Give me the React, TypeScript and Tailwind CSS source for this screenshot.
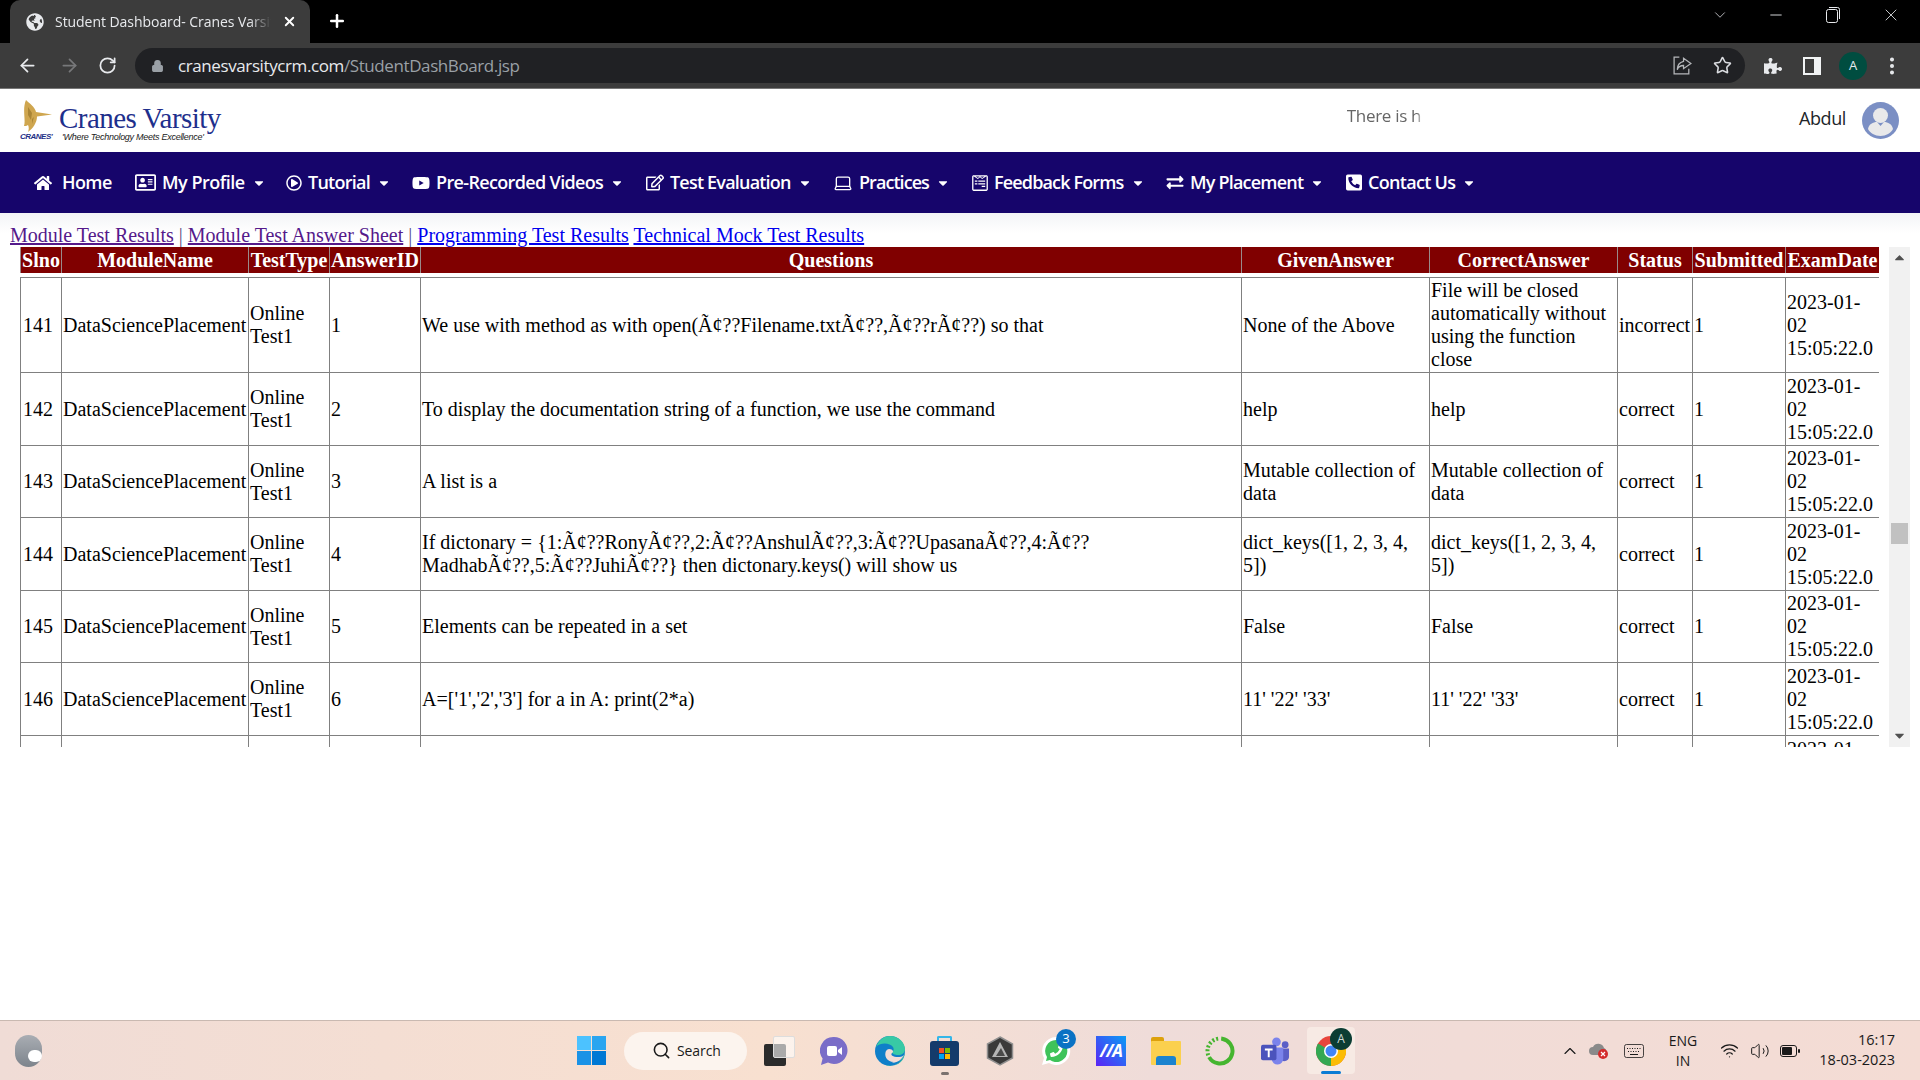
import type { ReactNode } from "react";
import { ChevronDown, Minus, X, Plus, ArrowLeft, ArrowRight, RotateCw, Lock, Star, Laptop, Search, ChevronUp, Wifi, Volume2, MoreVertical } from "lucide-react";
import { FaHome, FaRegAddressCard, FaRegPlayCircle, FaYoutube, FaRegEdit, FaWpforms, FaExchangeAlt, FaPhoneSquareAlt, FaPuzzlePiece, FaGlobeAmericas, FaCaretDown, FaCaretUp, FaPhoneAlt } from "react-icons/fa";

// Пункты меню: ширина и трекинг заданы явно, чтобы шаг совпадал с оригиналом.
const NAV_ITEMS: { label: string; icon: ReactNode; width: string; tracking: string; caret: boolean }[] = [
  { label: "Home", icon: <FaHome className="w-[18px] h-[16px] mr-[4px]" />, width: "w-[101px]", tracking: "tracking-[-0.6px]", caret: false },
  { label: "My Profile", icon: <FaRegAddressCard className="w-[21px] h-[19px]" />, width: "w-[151px]", tracking: "tracking-[-0.5px]", caret: true },
  { label: "Tutorial", icon: <FaRegPlayCircle className="w-[16px] h-[16px]" />, width: "w-[126px]", tracking: "tracking-[-0.75px]", caret: true },
  { label: "Pre-Recorded Videos", icon: <FaYoutube className="w-[18px] h-[18px]" />, width: "w-[234px]", tracking: "tracking-[-0.65px]", caret: true },
  { label: "Test Evaluation", icon: <FaRegEdit className="w-[18px] h-[17px]" />, width: "w-[187px]", tracking: "tracking-[-0.8px]", caret: true },
  { label: "Practices", icon: <Laptop className="w-[20px] h-[20px]" strokeWidth={1.6} />, width: "w-[139px]", tracking: "tracking-[-0.95px]", caret: true },
  { label: "Feedback Forms", icon: <FaWpforms className="w-[16px] h-[18px]" />, width: "w-[194px]", tracking: "tracking-[-0.85px]", caret: true },
  { label: "My Placement", icon: <FaExchangeAlt className="w-[18px] h-[17px]" />, width: "w-[180px]", tracking: "tracking-[-0.8px]", caret: true },
  { label: "Contact Us", icon: <FaPhoneSquareAlt className="w-[16px] h-[19px]" />, width: "w-[135px]", tracking: "tracking-[-0.7px]", caret: true },
];

const COLUMNS = ["Slno", "ModuleName", "TestType", "AnswerID", "Questions", "GivenAnswer", "CorrectAnswer", "Status", "Submitted", "ExamDate"];

type Row = { id: number; answerId: number; question: string; given: string; correct: string; status: string; height: string };

const ROWS: Row[] = [
  { id: 141, answerId: 1, question: "We use with method as with open(Ã¢??Filename.txtÃ¢??,Ã¢??rÃ¢??) so that", given: "None of the Above", correct: "File will be closed automatically without using the function close", status: "incorrect", height: "h-[95px]" },
  { id: 142, answerId: 2, question: "To display the documentation string of a function, we use the command", given: "help", correct: "help", status: "correct", height: "h-[73px]" },
  { id: 143, answerId: 3, question: "A list is a", given: "Mutable collection of data", correct: "Mutable collection of data", status: "correct", height: "h-[72px]" },
  { id: 144, answerId: 4, question: "If dictonary = {1:Ã¢??RonyÃ¢??,2:Ã¢??AnshulÃ¢??,3:Ã¢??UpasanaÃ¢??,4:Ã¢?? MadhabÃ¢??,5:Ã¢??JuhiÃ¢??} then dictonary.keys() will show us", given: "dict_keys([1, 2, 3, 4, 5])", correct: "dict_keys([1, 2, 3, 4, 5])", status: "correct", height: "h-[73px]" },
  { id: 145, answerId: 5, question: "Elements can be repeated in a set", given: "False", correct: "False", status: "correct", height: "h-[72px]" },
  { id: 146, answerId: 6, question: "A=['1','2','3'] for a in A: print(2*a)", given: "11' '22' '33'", correct: "11' '22' '33'", status: "correct", height: "h-[73px]" },
  { id: 147, answerId: 7, question: "", given: "", correct: "", status: "correct", height: "h-[73px]" },
];

function TableCols() {
  return (
    <colgroup>
      <col className="w-[41px]" />
      <col className="w-[187px]" />
      <col className="w-[81px]" />
      <col className="w-[91px]" />
      <col className="w-[821px]" />
      <col className="w-[188px]" />
      <col className="w-[188px]" />
      <col className="w-[75px]" />
      <col className="w-[93px]" />
      <col className="w-[94px]" />
    </colgroup>
  );
}

function BrowserChrome() {
  return (
    <div className="shrink-0 font-['Open_Sans',sans-serif]">
      {/* Полоса вкладок */}
      <div className="h-[43px] bg-black flex items-end text-white">
        <div className="ml-[10px] w-[300px] h-[43px] rounded-t-[10px] bg-[#3c3c3c] flex items-center pl-[16px] pr-[13px] gap-[11px]">
          <FaGlobeAmericas className="w-[18px] h-[18px] text-[#e8eaed] shrink-0" />
          <span className="w-[224px] overflow-hidden whitespace-nowrap text-[14px] tracking-[-0.05px] text-[#e8eaed] [mask-image:linear-gradient(90deg,#000_90%,transparent)]">Student Dashboard- Cranes Varsity</span>
          <X className="w-[15px] h-[15px] shrink-0" strokeWidth={3} />
        </div>
        <Plus className="ml-[17px] mb-[12px] w-[20px] h-[20px]" strokeWidth={3} />
        <div className="ml-auto flex items-center h-[43px] mb-[7px] text-[#e8eaed]">
          <ChevronDown className="w-[18px] h-[18px] mr-[38px]" strokeWidth={1} />
          <Minus className="w-[18px] h-[18px] mr-[41px]" strokeWidth={1.2} />
          <svg viewBox="0 0 14 16" className="w-[14px] h-[16px] mr-[41px]" fill="none" stroke="currentColor">
            <rect x="0.500" y="2.500" width="11" height="13" rx="2" />
            <path d="M3 0.500h8.500a2 2 0 0 1 2 2V12" />
          </svg>
          <X className="w-[20px] h-[20px] mr-[19px]" strokeWidth={1} />
        </div>
      </div>
      {/* Панель адреса */}
      <div className="h-[46px] bg-[#3c3c3c] border-b border-[#777] flex items-start pt-[5px] text-white">
        <div className="flex items-center h-[35px] text-[#e8eaed]">
          <ArrowLeft className="ml-[17px] w-[21px] h-[21px]" strokeWidth={2} />
          <ArrowRight className="ml-[21px] w-[21px] h-[21px] text-[#77787a]" strokeWidth={2} />
          <RotateCw className="ml-[18px] w-[19px] h-[19px]" strokeWidth={2.2} />
        </div>
        <div className="ml-[18px] w-[1610px] h-[35px] rounded-full bg-[#202124] flex items-center">
          <Lock className="ml-[16px] w-[13px] h-[14px] text-[#9aa0a6] fill-[#9aa0a6]" />
          <span className="ml-[14px] text-[17px] tracking-[-0.4px] text-[#e8eaed]">
            cranesvarsitycrm.com<span className="text-[#9aa0a6]">/StudentDashBoard.jsp</span>
          </span>
          <svg viewBox="0 0 20 20" className="ml-auto w-[21px] h-[21px] text-[#b5b7ba]" fill="none" stroke="currentColor" strokeWidth="1.2">
            <path d="M7 2H2v16h14v-5" />
            <path d="M11 3l7 5-7 5v-3c-3 0-5 1-6 4 0-5 2-7 6-8z" />
          </svg>
          <Star className="ml-[20px] mr-[13px] w-[19px] h-[19px] text-[#dadce0]" strokeWidth={2} />
        </div>
        <div className="flex items-center h-[35px] text-[#e8eaed]">
          <FaPuzzlePiece className="ml-[19px] w-[18px] h-[18px]" />
          <div className="ml-[21px] w-[18px] h-[18px] border-[2px] border-r-[7px] border-[#f1f3f4]" />
          <div className="ml-[18px] w-[28px] h-[28px] rounded-full bg-[#004d40] flex items-center justify-center text-[13px]">A</div>
          <MoreVertical className="ml-[14px] w-[22px] h-[22px]" strokeWidth={2.4} />
        </div>
      </div>
    </div>
  );
}

function CranesLogo() {
  return (
    <div className="flex items-start">
      <div className="w-[39px] flex flex-col">
        <svg viewBox="0 0 29 32" className="ml-[3px] w-[29px] h-[32px]">
          <path d="M3 0c3 3 9 7 10 12l16 2.500-15 2c0 6-4 12-9 15.500 1-3 1-5 0-7-1 1-3 1-4 1C3 20-1 9 3 0z" fill="#cfa64f" />
          <path d="M5 7l4 6-1 7-3-5zM9 19l2-2-2 7z" fill="#a98536" />
        </svg>
        <span className="text-[8px] leading-[10px] font-bold italic text-[#1f2f86] font-['Liberation_Sans',sans-serif] tracking-[-0.5px]">CRANES'</span>
      </div>
      <div className="flex flex-col pt-[5px]">
        <span className="text-[29px] leading-[27px] tracking-[-0.55px] text-[#1e2f8c] font-['Liberation_Serif',serif] whitespace-nowrap">Cranes Varsity</span>
        <span className="ml-[3px] text-[9px] leading-[10px] italic text-[#222] font-['Liberation_Sans',sans-serif] tracking-[-0.27px] whitespace-nowrap">'Where Technology Meets Excellence'</span>
      </div>
    </div>
  );
}

function PageHeader() {
  return (
    <div className="h-[63px] shrink-0 bg-white flex items-center pl-[20px] pr-[21px] font-['Open_Sans',sans-serif]">
      <CranesLogo />
      <span className="ml-[1126px] -mt-[10px] w-[76px] overflow-hidden whitespace-nowrap text-[17px] tracking-[-0.3px] text-[#666] [mask-image:linear-gradient(90deg,#000_92%,transparent)]">There is h</span>
      <span className="ml-auto mr-[16px] -mt-[5px] text-[18px] tracking-[-0.4px] text-[#212529]">Abdul</span>
      <svg viewBox="0 0 37 37" className="w-[37px] h-[37px]">
        <circle cx="18.5" cy="18.5" r="18.5" fill="#7b8fc4" />
        <circle cx="18.5" cy="13.5" r="7.5" fill="#e9e9ea" />
        <path d="M6 27c1-5 5-7 9-7l3.5 4 3.5-4c4 0 8 2 9 7-2 4-7 7-12.500 7S8 31 6 27z" fill="#e9e9ea" />
      </svg>
    </div>
  );
}

function NavBar() {
  return (
    <nav className="h-[61px] shrink-0 bg-[#16056b] flex items-center pl-[34px] text-white font-['Open_Sans',sans-serif] font-semibold">
      {NAV_ITEMS.map((item) => (
        <div key={item.label} className={`${item.width} flex items-center shrink-0`}>
          <span className="shrink-0 flex items-center">{item.icon}</span>
          <span className={`ml-[6px] text-[18px] ${item.tracking} whitespace-nowrap`}>{item.label}</span>
          {item.caret && <FaCaretDown className="ml-[7px] w-[14px] h-[14px] shrink-0" />}
        </div>
      ))}
    </nav>
  );
}

function ResultsTable() {
  return (
    <div className="flex items-stretch h-[500px] ml-[20px]">
      <div className="w-[1859px] overflow-hidden">
        <table className="table-fixed w-[1859px] border-collapse">
          <TableCols />
          <thead>
            <tr className="h-[26px] bg-[#800000] text-white">
              {COLUMNS.map((col) => (
                <th key={col} className="px-0 border-x border-[#9a8a8a] font-bold whitespace-nowrap text-center">{col}</th>
              ))}
            </tr>
          </thead>
        </table>
        <table className="table-fixed w-[1859px] border-collapse mt-[4px] text-black">
          <TableCols />
          <tbody>
            {ROWS.map((row) => (
              <tr key={row.id} className={row.height}>
                <td className="border border-[#808080] pl-[2px] py-0">{row.id}</td>
                <td className="border border-[#808080] px-px py-0 whitespace-nowrap">DataSciencePlacement</td>
                <td className="border border-[#808080] px-px py-0">Online Test1</td>
                <td className="border border-[#808080] px-px py-0">{row.answerId}</td>
                <td className="border border-[#808080] px-px py-0">{row.question}</td>
                <td className="border border-[#808080] px-px py-0">{row.given}</td>
                <td className="border border-[#808080] px-px py-0">{row.correct}</td>
                <td className="border border-[#808080] px-px py-0">{row.status}</td>
                <td className="border border-[#808080] px-px py-0">1</td>
                <td className="border border-[#808080] px-px py-0">2023-01-02 15:05:22.0</td>
              </tr>
            ))}
          </tbody>
        </table>
      </div>
      {/* Полоса прокрутки таблицы */}
      <div className="ml-[10px] w-[21px] bg-[#f1f1f1] flex flex-col items-center text-[#505050]">
        <FaCaretUp className="mt-[3px] w-[15px] h-[15px]" />
        <div className="mt-[258px] w-[17px] h-[21px] bg-[#c1c1c1]" />
        <FaCaretDown className="mt-auto mb-[4px] w-[15px] h-[15px]" />
      </div>
    </div>
  );
}

function MainContent() {
  return (
    <main className="flex-1 bg-white bg-[linear-gradient(#f3f4f6,#ffffff_20px)] font-['Liberation_Serif',serif] text-[20px] leading-[23px]">
      <div className="pl-[10px] pt-[11px] h-[34px] text-[#5a4a80] whitespace-nowrap">
        <a className="underline text-[#551a8b]">Module Test Results</a> | <a className="underline text-[#551a8b]">Module Test Answer Sheet</a> | <a className="underline text-[#0000ee]">Programming Test Results</a> <a className="underline text-[#0000ee]">Technical Mock Test Results</a>
      </div>
      <ResultsTable />
    </main>
  );
}

function Taskbar() {
  return (
    <div className="h-[60px] shrink-0 border-t border-[#c9b9b1] bg-[linear-gradient(90deg,#f0dcd6,#f8e0d0_40%,#efdcd9_60%,#f4dcd4)] flex items-center font-['Open_Sans',sans-serif] text-[#1a1a1a]">
      {/* Погода */}
      <div className="ml-[15px] w-[27px] h-[32px] rounded-full bg-[linear-gradient(#a9adb3,#7d848c)] flex items-end justify-end pb-[5px]">
        <div className="w-[14px] h-[12px] rounded-full bg-white" />
      </div>

      {/* Пуск */}
      <svg viewBox="0 0 29 29" className="ml-[535px] w-[29px] h-[29px]">
        <rect x="0" y="0" width="14" height="14" fill="#4cc2ff" />
        <rect x="15" y="0" width="14" height="14" fill="#2aa5f0" />
        <rect x="0" y="15" width="14" height="14" fill="#1a92e6" />
        <rect x="15" y="15" width="14" height="14" fill="#0078d4" />
      </svg>
      <div className="ml-[18px] w-[123px] h-[38px] rounded-full bg-[#fcf4ee] flex items-center pl-[28px] text-[14px] gap-[6px]">
        <Search className="w-[19px] h-[19px]" strokeWidth={2} />
        <span className="tracking-[-0.1px]">Search</span>
      </div>

      {/* Представление задач */}
      <div className="relative ml-[17px] w-[31px] h-[30px]">
        <div className="absolute left-0 bottom-0 w-[22px] h-[22px] rounded-[2px] bg-[#2b2b2b]" />
        <div className="absolute right-0 top-0 w-[22px] h-[22px] rounded-[2px] bg-white/60 border border-[#ddd]" />
      </div>

      {/* Чат */}
      <svg viewBox="0 0 28 30" className="ml-[25px] w-[28px] h-[30px]">
        <path d="M14 1a13.500 13.500 0 1 1-6 25.600L1 29l1.600-6.500A13.500 13.500 0 0 1 14 1z" fill="#7a6dc8" />
        <rect x="7" y="10" width="10" height="10" rx="2" fill="#fff" />
        <path d="M18 14l4-3v8l-4-3z" fill="#fff" />
      </svg>

      {/* Edge */}
      <svg viewBox="0 0 30 30" className="ml-[27px] w-[30px] h-[30px]">
        <circle cx="15" cy="15" r="15" fill="#0f7fc9" />
        <path d="M30 17c-1 8-7 13-15 13-2 0-3 0-4-1 6 2 12 0 15-5 1-2 3-5 4-7z" fill="#35b6a8" />
        <path d="M1 11C4 3 10 0 15 0c9 0 15 7 15 13 0 4-3 6-7 6-3 0-6-1-6-3 2-1 2-3 1-5-3-4-12-5-17 0z" fill="#38c9a5" />
        <path d="M14 13c4 0 5 3 3 4-2 2 1 4 6 4 2 0 4 0 6-2-3 6-8 8-13 8-7 0-8-5-7-8 1-3 3-6 5-6z" fill="#f2dcd6" />
        <path d="M11 15c-2 4 0 11 8 11-3 2-8 2-10-1-3-3-1-8 2-10z" fill="#0f7fc9" />
      </svg>

      {/* Store */}
      <div className="relative ml-[25px] w-[29px] h-[30px]">
        <div className="absolute left-[7px] top-0 w-[15px] h-[8px] border-2 border-b-0 border-[#35b6e8] rounded-t-[2px]" />
        <div className="absolute left-0 top-[5px] w-[29px] h-[25px] rounded-[3px] bg-[#143b6b] flex items-center justify-center">
          <div className="grid grid-cols-2 gap-px w-[11px] h-[11px]">
            <div className="bg-[#f25022]" />
            <div className="bg-[#7fba00]" />
            <div className="bg-[#00a4ef]" />
            <div className="bg-[#ffb900]" />
          </div>
        </div>
        <div className="absolute left-[11px] top-[36px] w-[8px] h-[3px] rounded-full bg-[#7a716e]" />
      </div>

      {/* Шестиугольник */}
      <svg viewBox="0 0 28 30" className="ml-[27px] w-[28px] h-[30px]">
        <path d="M14 1l12.500 7v14L14 29 1.500 22V8z" fill="#3a3a3a" stroke="#8f8f8f" strokeWidth="1.5" />
        <path d="M14 6l8 15H6z" fill="#b5b5b5" />
        <path d="M15 12l4 8h-9z" fill="#4a4a4a" />
      </svg>

      {/* WhatsApp */}
      <div className="relative ml-[27px] w-[30px] h-[30px]">
        <svg viewBox="0 0 30 30" className="w-[30px] h-[30px]">
          <path d="M15 1a14 14 0 1 1-7 26L1 29l2-7A14 14 0 0 1 15 1z" fill="#fff" />
          <path d="M15 4a11 11 0 1 1-6 20l-4 1 1-4A11 11 0 0 1 15 4z" fill="#3fc35a" />
        </svg>
        <FaPhoneAlt className="absolute left-[9px] top-[8px] w-[13px] h-[13px] text-white scale-x-[-1]" />
        <div className="absolute -right-[5px] -top-[7px] w-[20px] h-[20px] rounded-full bg-[#0a72c4] text-white text-[13px] flex items-center justify-center">3</div>
      </div>

      {/* MA */}
      <div className="ml-[25px] w-[30px] h-[30px] bg-[linear-gradient(45deg,#5b22f5,#0a9cf5)] text-white italic font-bold text-[17px] flex items-center justify-center tracking-[-1px]">//A</div>

      {/* Проводник */}
      <div className="relative ml-[25px] w-[30px] h-[28px]">
        <div className="absolute left-0 top-0 w-[13px] h-[8px] rounded-t-[2px] bg-[#dda10c]" />
        <div className="absolute left-0 top-[4px] w-[30px] h-[24px] rounded-[1px] bg-[#fbd04e]" />
        <div className="absolute left-[5px] top-[19px] w-[20px] h-[9px] rounded-t-[3px] bg-[#1b83cf]" />
      </div>

      {/* Зелёное кольцо */}
      <svg viewBox="0 0 30 30" className="ml-[24px] w-[30px] h-[30px]">
        <circle cx="15" cy="15" r="12.500" fill="none" stroke="#45b52f" strokeWidth="4" strokeDasharray="50 2 2 2 2 2 2 2 2 2 2 2 2 3" transform="rotate(-80 15 15)" />
      </svg>

      {/* Teams */}
      <svg viewBox="0 0 30 30" className="ml-[26px] w-[29px] h-[29px]">
        <circle cx="25" cy="9" r="3.500" fill="#5b5fc7" />
        <circle cx="16" cy="6" r="4.500" fill="#7b83eb" />
        <path d="M20 13h9v9a5 5 0 0 1-9 2z" fill="#5b5fc7" />
        <path d="M9 12h14v11a6 6 0 0 1-12 1z" fill="#7b83eb" />
        <rect x="0" y="9" width="16" height="16" rx="2" fill="#4b53bc" />
        <path d="M4 13h8v2H9v7H7v-7H4z" fill="#fff" />
      </svg>

      {/* Chrome с профилем */}
      <div className="relative ml-[17px] w-[48px] h-[47px] rounded-[4px] bg-[#f7eae4] flex items-center justify-center">
        <svg viewBox="0 0 30 30" className="w-[30px] h-[30px]">
          <circle cx="15" cy="15" r="15" fill="#e8453c" />
          <path d="M15 15L2 7.500A15 15 0 0 0 15 30z" fill="#34a853" />
          <path d="M15 15v15A15 15 0 0 0 28 7.500H15z" fill="#fbbc05" />
          <circle cx="15" cy="15" r="7" fill="#fff" />
          <circle cx="15" cy="15" r="5.500" fill="#4285f4" />
        </svg>
        <div className="absolute right-[3px] top-[1px] w-[22px] h-[22px] rounded-full bg-[#0b3d33] text-[#cfd8d5] text-[12px] flex items-center justify-center">A</div>
        <div className="absolute left-[14px] bottom-0 w-[20px] h-[3px] rounded-full bg-[#0a7bd4]" />
      </div>

      {/* Трей */}
      <ChevronUp className="ml-[205px] w-[20px] h-[20px]" strokeWidth={1.4} />
      <svg viewBox="0 0 20 16" className="ml-[9px] w-[20px] h-[16px]">
        <path d="M4 12a4 4 0 0 1 0-8 6 6 0 0 1 11 1 4 4 0 0 1 1 7z" fill="#8a8a8a" />
        <circle cx="14" cy="11" r="5" fill="#d42b2b" />
        <path d="M12 9l4 4m0-4l-4 4" stroke="#fff" strokeWidth="1.2" />
      </svg>
      <svg viewBox="0 0 20 14" className="ml-[15px] w-[20px] h-[14px]" fill="none" stroke="#1a1a1a">
        <rect x="0.500" y="0.500" width="19" height="13" rx="2" strokeWidth="0.8" />
        <path d="M3 4.500h14M4 7.500h12" strokeWidth="1" strokeDasharray="1 1.500" />
        <path d="M6 10.500h8" strokeWidth="1" />
      </svg>
      <div className="ml-[25px] w-[28px] flex flex-col items-center text-[14px] leading-[20px]">
        <span>ENG</span>
        <span>IN</span>
      </div>
      <Wifi className="ml-[23px] w-[19px] h-[19px]" strokeWidth={1.6} />
      <Volume2 className="ml-[11px] w-[20px] h-[20px]" strokeWidth={1.2} />
      <svg viewBox="0 0 20 12" className="ml-[10px] w-[20px] h-[12px]">
        <rect x="0.500" y="0.500" width="16" height="11" rx="2.500" fill="none" stroke="#1a1a1a" />
        <rect x="2" y="2" width="10" height="8" rx="1" fill="#1a1a1a" />
        <rect x="18" y="4" width="2" height="4" rx="1" fill="#1a1a1a" />
      </svg>
      <div className="ml-auto mr-[25px] -mt-[2px] flex flex-col items-end text-[14.5px] leading-[20px]">
        <span>16:17</span>
        <span>18-03-2023</span>
      </div>
    </div>
  );
}

export default function App() {
  return (
    <div className="w-[1920px] h-[1080px] flex flex-col overflow-hidden bg-white">
      <BrowserChrome />
      <PageHeader />
      <NavBar />
      <MainContent />
      <Taskbar />
    </div>
  );
}
